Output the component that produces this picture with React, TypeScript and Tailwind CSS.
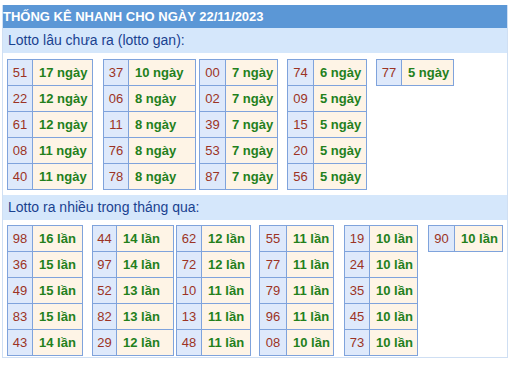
import React from "react"

type Cell = [string, string]

type Table = {
  ml: string
  nw: string
  tw: string
  rows: Cell[]
}

const ganTables: Table[] = [
  {
    ml: "ml-0",
    nw: "w-[25px]",
    tw: "w-[60px]",
    rows: [["51", "17 ngày"], ["22", "12 ngày"], ["61", "12 ngày"], ["08", "11 ngày"], ["40", "11 ngày"]],
  },
  {
    ml: "ml-[10px]",
    nw: "w-[25px]",
    tw: "w-[67px]",
    rows: [["37", "10 ngày"], ["06", "8 ngày"], ["11", "8 ngày"], ["76", "8 ngày"], ["78", "8 ngày"]],
  },
  {
    ml: "ml-[3px]",
    nw: "w-[26px]",
    tw: "w-[52px]",
    rows: [["00", "7 ngày"], ["02", "7 ngày"], ["39", "7 ngày"], ["53", "7 ngày"], ["87", "7 ngày"]],
  },
  {
    ml: "ml-[9px]",
    nw: "w-[26px]",
    tw: "w-[53px]",
    rows: [["74", "6 ngày"], ["09", "5 ngày"], ["15", "5 ngày"], ["20", "5 ngày"], ["56", "5 ngày"]],
  },
  {
    ml: "ml-[9px]",
    nw: "w-[25px]",
    tw: "w-[52px]",
    rows: [["77", "5 ngày"]],
  },
]

const nhieuTables: Table[] = [
  {
    ml: "ml-0",
    nw: "w-[25px]",
    tw: "w-[50px]",
    rows: [["98", "16 lần"], ["36", "15 lần"], ["49", "15 lần"], ["83", "15 lần"], ["43", "14 lần"]],
  },
  {
    ml: "ml-[9px]",
    nw: "w-[24px]",
    tw: "w-[57px]",
    rows: [["44", "14 lần"], ["97", "14 lần"], ["52", "13 lần"], ["82", "13 lần"], ["29", "12 lần"]],
  },
  {
    ml: "ml-[2px]",
    nw: "w-[25px]",
    tw: "w-[49px]",
    rows: [["62", "12 lần"], ["72", "12 lần"], ["10", "11 lần"], ["13", "11 lần"], ["48", "11 lần"]],
  },
  {
    ml: "ml-[8px]",
    nw: "w-[27px]",
    tw: "w-[47px]",
    rows: [["55", "11 lần"], ["77", "11 lần"], ["79", "11 lần"], ["96", "11 lần"], ["08", "10 lần"]],
  },
  {
    ml: "ml-[10px]",
    nw: "w-[25px]",
    tw: "w-[48px]",
    rows: [["19", "10 lần"], ["24", "10 lần"], ["35", "10 lần"], ["45", "10 lần"], ["73", "10 lần"]],
  },
  {
    ml: "ml-[10px]",
    nw: "w-[26px]",
    tw: "w-[48px]",
    rows: [["90", "10 lần"]],
  },
]

function LottoTable({ t }: { t: Table }) {
  return (
    <div className={`${t.ml} flex flex-col self-start border-t border-l border-[#7fa3dc]`}>
      {t.rows.map(([num, txt], i) => (
        <div key={i} className="flex h-[26px]">
          <div
            className={`${t.nw} flex items-center justify-center border-r border-b border-[#7fa3dc] bg-[#dee9fb] text-[13px] text-[#9c3324]`}
          >
            {num}
          </div>
          <div
            className={`${t.tw} flex items-center pl-[6px] border-r border-b border-[#7fa3dc] bg-[#fef4e6] text-[13px] font-bold text-[#23801c] whitespace-nowrap`}
          >
            {txt}
          </div>
        </div>
      ))}
    </div>
  )
}

function SubHeader({ title }: { title: string }) {
  return (
    <div className="h-[25px] flex items-center pl-[5px] bg-[#d5e7fb] text-[14px] text-[#1a4290]">
      {title}
    </div>
  )
}

export default function App() {
  return (
    <div className="w-[510px] h-[366px] bg-white pt-[5px] pl-[2px] font-['Liberation_Sans',Arial,sans-serif] overflow-hidden">
      <div className="w-[506px] border-x border-b border-[#cfdff3] pb-px">
        {/* Title bar */}
        <div className="h-[23px] flex items-center bg-[#5b97d6] text-[13px] font-bold text-white">
          THỐNG KÊ NHANH CHO NGÀY 22/11/2023
        </div>

        <SubHeader title="Lotto lâu chưa ra (lotto gan):" />
        <div className="flex pl-[4px] mt-[6px] mb-[5px]">
          {ganTables.map((t, i) => (
            <LottoTable key={i} t={t} />
          ))}
        </div>

        <SubHeader title="Lotto ra nhiều trong tháng qua:" />
        <div className="flex pl-[4px] mt-[5px]">
          {nhieuTables.map((t, i) => (
            <LottoTable key={i} t={t} />
          ))}
        </div>
      </div>
    </div>
  )
}
